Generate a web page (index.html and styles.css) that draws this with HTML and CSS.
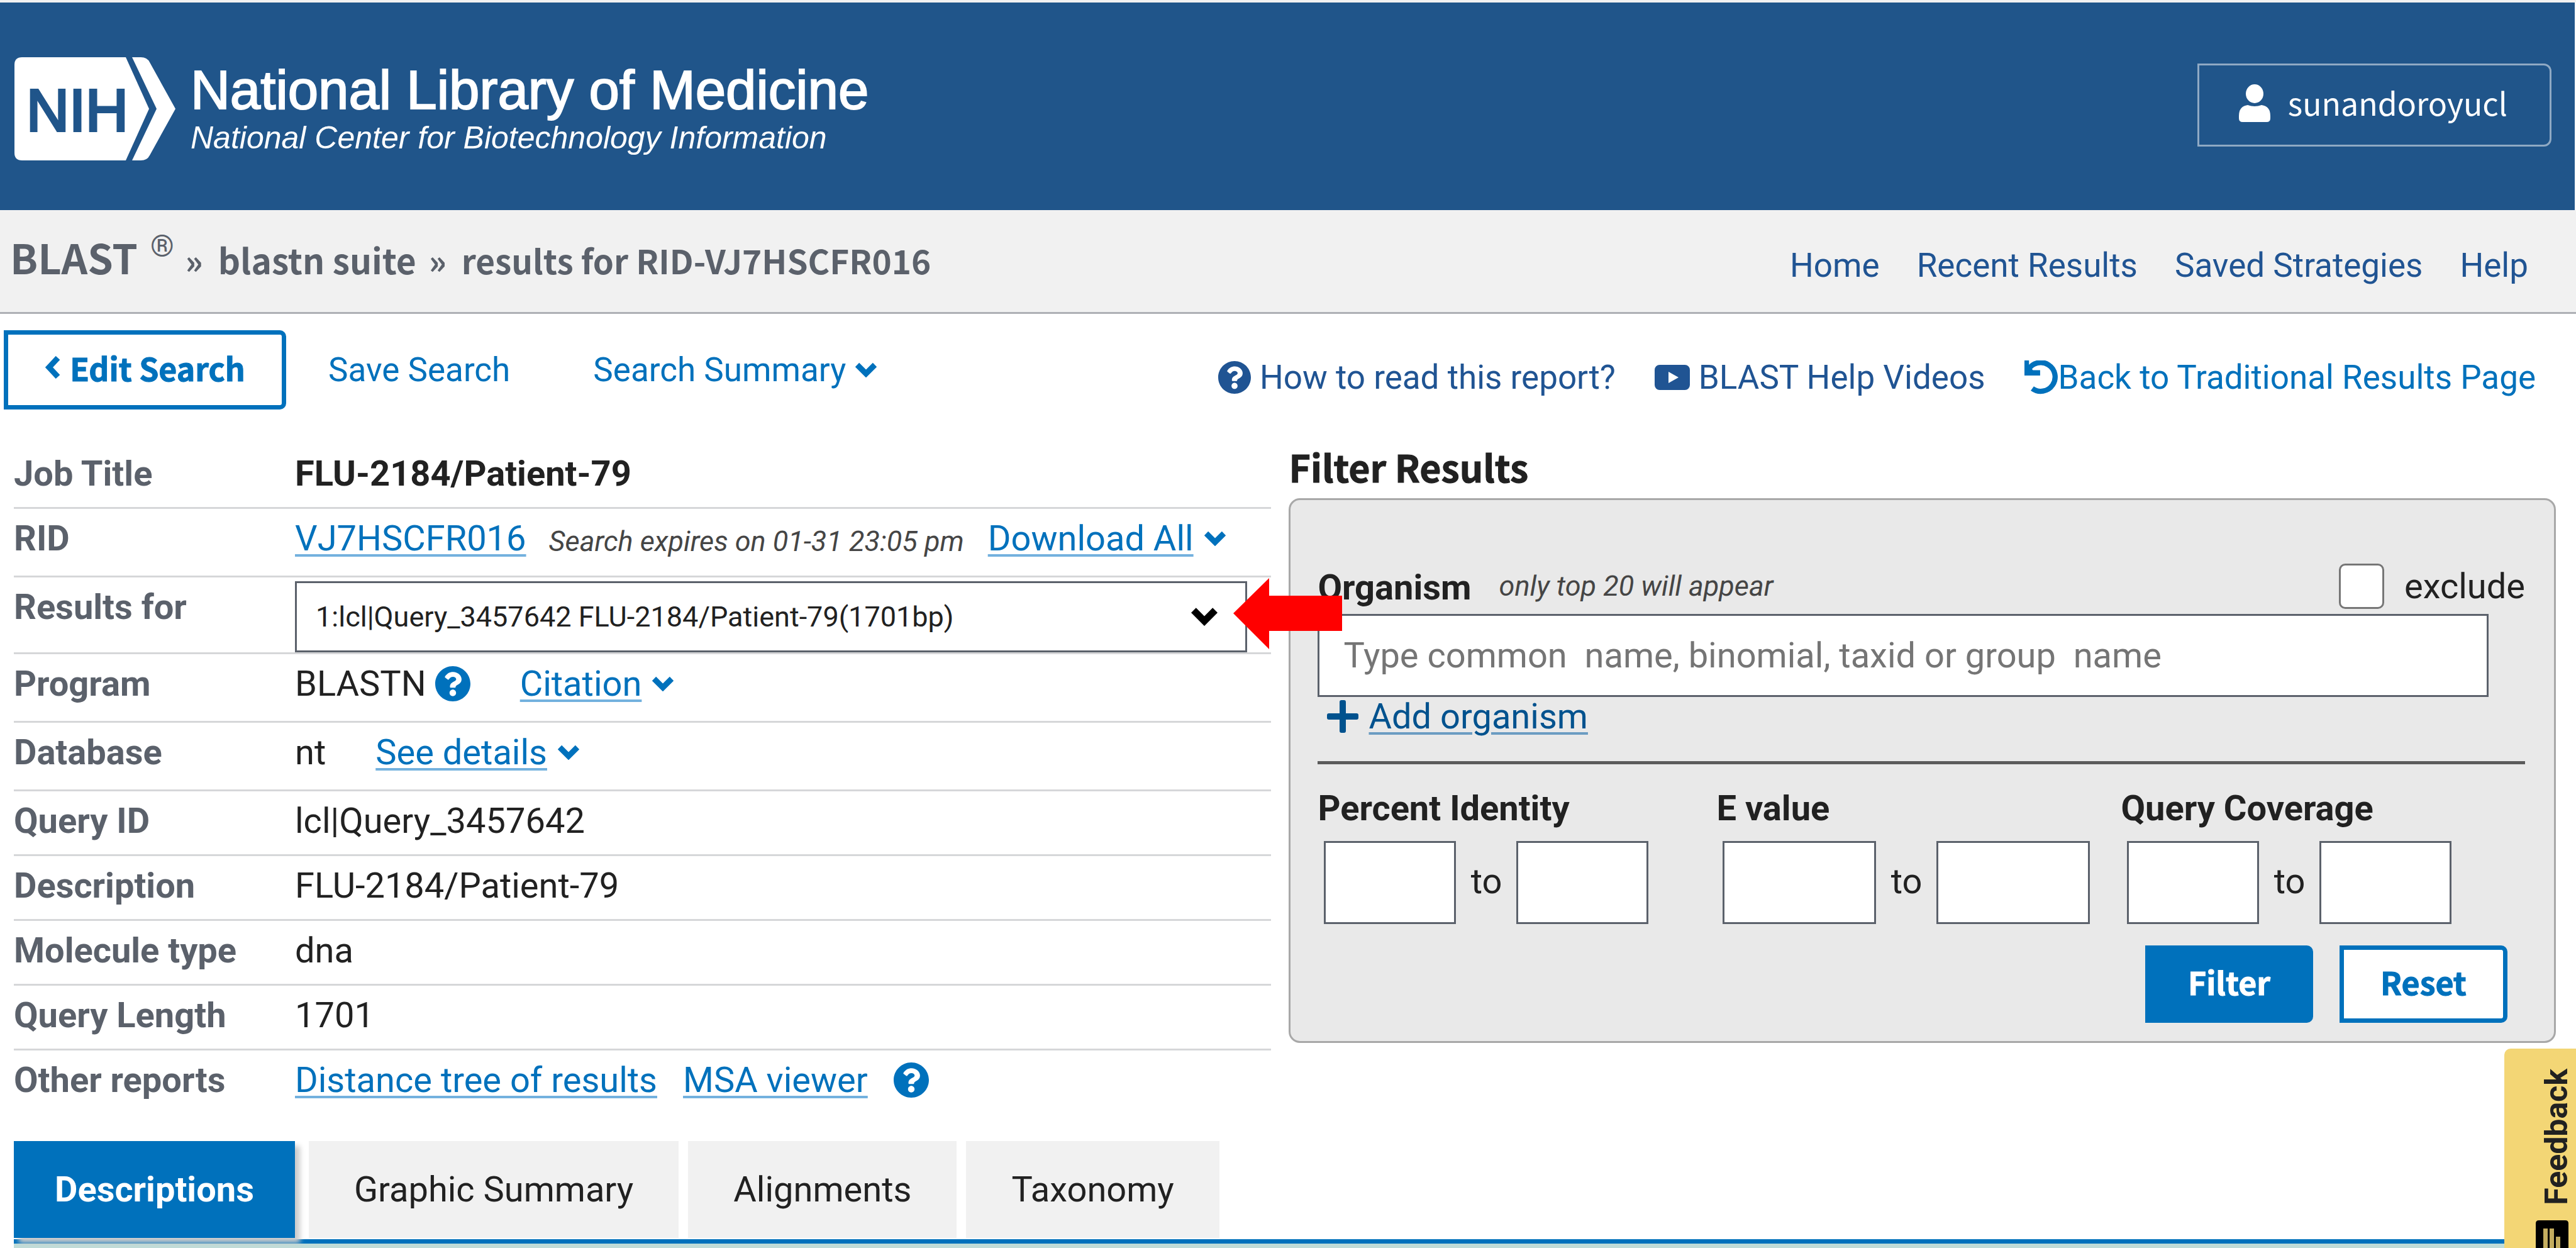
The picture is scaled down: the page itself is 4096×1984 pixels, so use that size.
FILE: index.html
```html
<!DOCTYPE html>
<html lang="en">
<head>
<meta charset="utf-8">
<title>NCBI Blast: FLU-2184/Patient-79</title>
<link rel="stylesheet" href="styles.css">
</head>
<body>
<svg class="sprite" aria-hidden="true">
  <symbol id="i-help" viewBox="8 8 496 496"><path d="M504 256c0 137-111 248-248 248S8 393 8 256 119 8 256 8s248 111 248 248zM262.700 90c-54.500 0-89.300 23-116.500 63.800-3.500 5.300-2.400 12.400 2.700 16.300l34.700 26.300c5.200 3.900 12.600 3 16.700-2.100 17.900-22.700 30.100-35.800 57.300-35.800 20.400 0 45.700 13.100 45.700 33 0 15-12.400 22.700-32.500 34C247.100 238.500 216 255 216 296v4c0 6.600 5.400 12 12 12h56c6.600 0 12-5.400 12-12v-1.300c0-28.500 83.200-29.600 83.200-106.700 0-58-60.200-102-116.500-102zM256 338c-25.400 0-46 20.600-46 46s20.600 46 46 46 46-20.600 46-46-20.600-46-46-46z" fill="currentColor"/></symbol>
  <symbol id="i-down" viewBox="0 0 36 24"><path d="M4 4L18 18L32 4" fill="none" stroke="currentColor" stroke-width="9"/></symbol>
  <symbol id="i-left" viewBox="0 0 26 36"><path d="M21 3L7 18L21 33" fill="none" stroke="currentColor" stroke-width="9"/></symbol>
  <symbol id="i-video" viewBox="0 0 56 40"><path fill-rule="evenodd" d="M8 0h40a8 8 0 0 1 8 8v24a8 8 0 0 1-8 8h-40a8 8 0 0 1-8-8v-24a8 8 0 0 1 8-8zM22 11v18l16-9z" fill="currentColor"/></symbol>
  <symbol id="i-undo" viewBox="0 0 52 52"><path d="M0 0h7v8l6 7h11v8h-24z" fill="currentColor"/><path d="M6 14A22 22 0 1 1 12 43" fill="none" stroke="currentColor" stroke-width="8"/></symbol>
  <symbol id="i-plus" viewBox="0 0 50 52"><path d="M20 3q0-3 3-3h4q3 0 3 3v18h17q3 0 3 3v4q0 3-3 3h-17v18q0 3-3 3h-4q-3 0-3-3v-18h-17q-3 0-3-3v-4q0-3 3-3h17z" fill="currentColor"/></symbol>
  <symbol id="i-user" viewBox="0 0 50 60"><ellipse cx="25" cy="15" rx="14" ry="15" fill="currentColor"/><path d="M14 33q11 4 22 0q14 2 14 17v4q0 6-6 6h-38q-6 0-6-6v-4q0-15 14-17z" fill="currentColor"/></symbol>
</svg>

<header class="masthead">
  <a class="brand" href="#">
    <svg class="nih" viewBox="0 0 256 164" role="img" aria-label="NIH">
      <path d="M12 0H177L214 82L177 164H12Q0 164 0 152V12Q0 0 12 0z" fill="#fff"/>
      <path d="M187 0H201Q211 0 215 8L256 82L215 156Q211 164 201 164H187L226 82z" fill="#fff"/>
      <text class="nih-text" x="19" y="117">NIH</text>
    </svg>
    <span class="brand-text">
      <span class="brand-name">National Library of Medicine</span>
      <span class="brand-center">National Center for Biotechnology Information</span>
    </span>
  </a>
  <button class="account" type="button"><svg class="user-icon"><use href="#i-user"/></svg><span class="user-name">sunandoroyucl</span></button>
</header>

<div class="crumb-bar">
  <h1 class="crumbs"><span class="crumb-blast">BLAST</span><sup class="crumb-reg">®</sup><span class="sep">»</span><span class="crumb-suite">blastn suite</span><span class="sep">»</span>results for RID-VJ7HSCFR016</h1>
  <nav class="site-nav">
    <a href="#">Home</a><a href="#">Recent Results</a><a href="#">Saved Strategies</a><a href="#">Help</a>
  </nav>
</div>

<div class="toolbar">
  <div class="search-tools">
    <button class="btn edit" type="button"><svg class="left-icon"><use href="#i-left"/></svg>Edit Search</button>
    <a href="#">Save Search</a>
    <a class="summary" href="#">Search Summary<svg class="down-icon"><use href="#i-down"/></svg></a>
  </div>
  <div class="help-links">
    <a class="navy" href="#"><svg class="help-icon small"><use href="#i-help"/></svg>How to read this report?</a>
    <a class="navy" href="#"><svg class="video-icon"><use href="#i-video"/></svg>BLAST Help Videos</a>
    <a class="back" href="#"><svg class="undo-icon"><use href="#i-undo"/></svg>Back to Traditional Results Page</a>
  </div>
</div>

<main class="report">
  <div class="job">
    <dl class="details">
      <div class="row"><dt>Job Title</dt><dd><strong>FLU-2184/Patient-79</strong></dd></div>
      <div class="row tall"><dt>RID</dt><dd><a class="link" href="#">VJ7HSCFR016</a><em class="note expires">Search expires on 01-31 23:05 pm</em><a class="link" href="#">Download All</a><svg class="down-icon"><use href="#i-down"/></svg></dd></div>
      <div class="row picker"><dt><label for="query">Results for</label></dt><dd class="select-wrap"><select id="query"><option>1:lcl|Query_3457642 FLU-2184/Patient-79(1701bp)</option></select><svg class="select-icon"><use href="#i-down"/></svg>
        <svg class="pointer" viewBox="0 0 173 113" aria-hidden="true"><path d="M0 56L57 0V28H173V84H57V113z" fill="#f00"/></svg></dd></div>
      <div class="row tall"><dt>Program</dt><dd>BLASTN<svg class="help-icon program-help"><use href="#i-help"/></svg><a class="link citation" href="#">Citation</a><svg class="down-icon"><use href="#i-down"/></svg></dd></div>
      <div class="row tall"><dt>Database</dt><dd>nt<a class="link see" href="#">See details</a><svg class="down-icon"><use href="#i-down"/></svg></dd></div>
      <div class="row"><dt>Query ID</dt><dd>lcl|Query_3457642</dd></div>
      <div class="row"><dt>Description</dt><dd>FLU-2184/Patient-79</dd></div>
      <div class="row"><dt>Molecule type</dt><dd>dna</dd></div>
      <div class="row"><dt>Query Length</dt><dd>1701</dd></div>
      <div class="row last"><dt>Other reports</dt><dd><a class="link" href="#">Distance tree of results</a><a class="link msa" href="#">MSA viewer</a><svg class="help-icon msa-help"><use href="#i-help"/></svg></dd></div>
    </dl>
  </div>

  <section class="filter">
    <h2>Filter Results</h2>
    <form class="panel">
      <div class="organism-head">
        <label class="field-title" for="organism">Organism</label>
        <em class="note">only top 20 will appear</em>
        <span class="exclude"><input type="checkbox" id="exclude"><label for="exclude">exclude</label></span>
      </div>
      <input class="organism" id="organism" type="text" placeholder="Type common  name, binomial, taxid or group  name">
      <div class="add"><svg class="plus-icon"><use href="#i-plus"/></svg><a class="link dark" href="#">Add organism</a></div>
      <div class="ranges">
        <fieldset class="range"><legend>Percent Identity</legend><div class="pair"><input type="text" aria-label="Percent identity from"><span>to</span><input type="text" aria-label="Percent identity to"></div></fieldset>
        <fieldset class="range wide"><legend>E value</legend><div class="pair"><input type="text" aria-label="E value from"><span>to</span><input type="text" aria-label="E value to"></div></fieldset>
        <fieldset class="range"><legend>Query Coverage</legend><div class="pair"><input type="text" aria-label="Query coverage from"><span>to</span><input type="text" aria-label="Query coverage to"></div></fieldset>
      </div>
      <div class="actions"><button class="btn solid" type="button">Filter</button><button class="btn" type="reset">Reset</button></div>
    </form>
  </section>
</main>

<nav class="tabs">
  <button class="tab active" type="button">Descriptions</button>
  <button class="tab" type="button">Graphic Summary</button>
  <button class="tab" type="button">Alignments</button>
  <button class="tab" type="button">Taxonomy</button>
</nav>
<div class="tab-panel"></div>

<button class="feedback" type="button"><span class="feedback-text">Feedback</span>
  <svg class="feedback-icon" viewBox="0 0 52 64"><path d="M5 0H47Q52 0 52 5V64H0V5Q0 0 5 0z" fill="#000"/><path d="M12 13h7v51h-7zM22 13h7v51h-7zM32 26h7v38h-7z" fill="#c4ad5f"/></svg>
</button>
</body>
</html>
```
FILE: styles.css
```css
* { box-sizing: border-box; }

html { background: #fff; }

body {
  margin: 0;
  min-height: 100vh;
  overflow: hidden;
  position: relative;
  border-top: 4px solid #f1f1f1;
  font: 56px/64px Roboto, "Liberation Sans", sans-serif;
  color: #212121;
}

a { color: #0071bc; text-decoration: none; }
button, input, select { font: inherit; color: inherit; margin: 0; }
svg { flex: none; }
.sprite { display: none; }

/* Masthead */
.masthead {
  display: flex;
  justify-content: space-between;
  align-items: flex-start;
  height: 330px;
  margin-right: 2px;
  padding: 87px 37px 0 23px;
  background: #20558a;
}
.brand { display: flex; color: #fff; gap: 24px; }
.nih { width: 256px; height: 164px; }
.nih-text {
  font: 94px "Liberation Sans", Arial, sans-serif;
  fill: #20558a;
  stroke: #20558a;
  stroke-width: 4px;
}
.brand-text { display: flex; flex-direction: column; padding-top: 4px; font-family: "Liberation Sans", Arial, sans-serif; }
.brand-name { font-size: 87px; line-height: 96px; -webkit-text-stroke: 2px #fff; }
.brand-center { font-size: 50px; line-height: 56px; font-style: italic; }
.account {
  display: flex;
  align-items: center;
  gap: 28px;
  height: 132px;
  margin-top: 10px;
  padding: 0 67px 6px 63px;
  border: 3px solid #8fa9c4;
  border-radius: 0 12px 12px 0;
  background: none;
  color: #fff;
  font: 50px/64px "Noto Sans CJK SC", sans-serif;
}
.user-icon { width: 50px; height: 60px; }
.user-name { padding-bottom: 4px; }

/* Breadcrumbs */
.crumb-bar {
  display: flex;
  justify-content: space-between;
  height: 165px;
  padding: 0 76px 0 16px;
  border-bottom: 3px solid #aeb0b5;
  background: #f1f1f1;
}
.crumbs {
  margin: 0;
  padding-top: 34px;
  color: #5b616b;
  font: bold 53px/80px "Noto Sans CJK SC", sans-serif;
}
.crumb-blast { font-size: 65px; }
.crumb-suite { font-size: 55px; }
.crumb-reg { margin: 0 18px 0 20px; font: 48px/1px Roboto, sans-serif; vertical-align: 28px; }
.sep { margin-right: 24px; }
.crumb-suite + .sep { margin-left: 20px; }
.site-nav { display: flex; gap: 59px; padding-top: 56px; font-size: 53px; }
.site-nav a, .navy { color: #205493; }

/* Toolbar */
.toolbar {
  display: flex;
  justify-content: space-between;
  padding: 26px 64px 0 6px;
  font-size: 53px;
}
.search-tools, .summary { display: flex; align-items: center; }
.btn {
  display: flex;
  align-items: center;
  justify-content: center;
  border: 7px solid #0071bc;
  border-radius: 0 10px 10px 0;
  background: #fff;
  color: #0071bc;
  padding: 0 0 8px;
  font: bold 50px/64px "Noto Sans CJK SC", sans-serif;
  -webkit-text-stroke: 1px currentColor;
}
.edit { width: 449px; height: 126px; gap: 14px; margin-right: 67px; }
.summary { margin-left: 132px; gap: 14px; }
.help-links { display: flex; align-items: center; gap: 62px; padding-top: 24px; }
.help-links a { display: flex; align-items: center; gap: 14px; }
.help-links .back { gap: 0; }
.left-icon { width: 26px; height: 36px; }
.down-icon { width: 36px; height: 24px; color: #0071bc; }
.help-icon { width: 56px; height: 56px; color: #0071bc; }
.small { width: 52px; height: 52px; color: inherit; }
.video-icon { width: 56px; height: 40px; }
.undo-icon { width: 54px; height: 54px; }

/* Job details */
.report { display: grid; grid-template-columns: minmax(0, 1999fr) minmax(0, 2014fr); gap: 28px; padding: 0 32px 0 22px; }
.job { padding-top: 55px; }
.details { margin: 0; }
.row {
  display: flex;
  padding: 15px 0 21px;
  border-bottom: 3px solid #d6d7d9;
}
.row.tall { padding-bottom: 27px; }
.row.last { border: 0; }
dt { width: 447px; color: #5b616b; font-weight: 700; }
dd { display: flex; align-items: center; margin: 0; flex: 1; }
.link {
  text-decoration: underline 4px #73b1de;
  text-underline-offset: 6px;
}
.dark { color: #00528e; text-decoration-color: #6b9cc2; }
.note { font-size: 45px; line-height: 52px; color: #454545; }
.expires { margin: 0 38px 0 36px; padding-top: 10px; }
.link + .down-icon { margin-left: 16px; }
.picker { padding: 6px 0 0; }
.picker dt { padding-top: 9px; }
.select-wrap { position: relative; }
#query {
  appearance: none;
  width: 1514px;
  height: 113px;
  padding: 0 30px;
  border: 3px solid #5b616b;
  border-radius: 0;
  background: #fff;
  font-size: 45px;
}
.select-icon { position: absolute; left: 1424px; top: 41px; width: 44px; height: 30px; color: #000; pointer-events: none; }
.pointer { position: absolute; z-index: 2; left: 1492px; top: -5px; width: 173px; height: 113px; }
.program-help { margin-left: 14px; }
.citation { margin-left: 79px; }
.see { margin-left: 79px; }
.msa { margin-left: 41px; }
.msa-help { margin-left: 41px; }

/* Filter form */
h2 {
  margin: 0;
  padding: 51px 0 10px;
  font: bold 59px/80px "Noto Sans CJK SC", sans-serif;
  -webkit-text-stroke: 1px currentColor;
}
.panel {
  height: 866px;
  padding: 100px 46px 0 43px;
  border: 3px solid #a8a8a8;
  border-radius: 18px;
  background: #e9e9e9;
}
.organism-head { display: flex; align-items: center; height: 74px; }
.field-title { font-weight: 700; padding-top: 4px; }
.organism-head .note { margin-left: 44px; }
.exclude { display: flex; align-items: center; gap: 32px; margin-left: auto; }
#exclude {
  appearance: none;
  width: 72px;
  height: 72px;
  border: 3px solid #767676;
  border-radius: 10px;
  background: #fff;
}
.panel input[type="text"] { border: 3px solid #5b616b; border-radius: 0; background: #fff; }
.panel .organism { display: block; width: 1862px; max-width: 100%; height: 132px; margin-top: 7px; padding: 0 38px; }
.organism::placeholder { color: #757575; opacity: 1; }
.add { display: flex; align-items: center; gap: 16px; height: 107px; padding: 0 0 41px 15px; border-bottom: 5px solid #5b5b5b; }
.plus-icon { width: 50px; height: 52px; color: #00528e; }
.ranges { display: flex; padding-top: 38px; }
.range { width: 634px; margin: 0; padding: 0; border: 0; }
.range.wide { width: 643px; }
legend { padding: 0; font-weight: 700; }
.pair { display: flex; align-items: center; padding: 20px 0 0 10px; }
.pair input { width: 210px; height: 132px; }
.wide .pair input { width: 244px; }
.pair span { width: 96px; padding-bottom: 4px; text-align: center; }
.actions { display: flex; justify-content: flex-end; gap: 42px; padding: 34px 28px 0 0; }
.actions .btn { width: 267px; height: 123px; padding-bottom: 10px; }
.actions .solid { background: #0071bc; color: #fff; }

/* Result tabs */
.tabs { display: flex; gap: 15px; padding: 44px 0 2px 22px; }
.tab { height: 154px; padding: 0 72px; border: 0; background: #f1f1f1; }
.tab.active { background: #0071bc; color: #fff; font-weight: 700; padding: 0 65px; margin-right: 7px; box-shadow: 8px 8px 8px #ccc; }
.tab-panel { margin-left: 22px; height: 14px; border-top: 7px solid #0071bc; background: #bfdcd8; }

.feedback {
  position: fixed;
  right: 0;
  bottom: 0;
  display: flex;
  flex-direction: column;
  align-items: flex-end;
  gap: 24px;
  width: 114px;
  height: 317px;
  padding: 32px 12px 0 0;
  border: 0;
  border-radius: 10px 0 0 0;
  background: #f3d675;
  overflow: hidden;
}
.feedback-text { writing-mode: vertical-rl; transform: rotate(180deg); font-size: 50px; line-height: 38px; font-weight: 700; }
.feedback-icon { width: 52px; height: 64px; }
```
